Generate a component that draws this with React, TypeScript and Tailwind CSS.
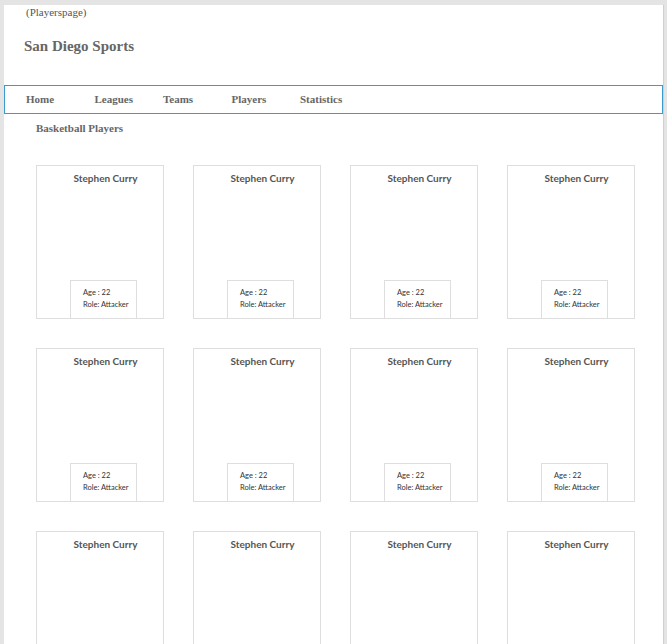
const navItems = ["Home", "Leagues", "Teams", "Players", "Statistics"];

const players = Array.from({ length: 12 }, (_, i) => ({
  id: i,
  name: "Stephen Curry",
  age: 22,
  role: "Attacker",
}));

function PlayerCard({ name, age, role }: { name: string; age: number; role: string }) {
  return (
    <div className="flex flex-col h-[154px] border border-[#dedede] bg-white">
      <div className="pt-[5px] pl-[11px] text-center text-[10px] leading-[14px] font-bold text-[#555] font-['Lato',sans-serif]">
        {name}
      </div>
      <div className="mt-auto ml-[33px] w-[67px] h-[38px] border border-b-0 border-[#dedede] pl-[12px] pt-[6px] text-[7.5px] leading-[12px] text-[#333] font-['Lato',sans-serif]">
        <div>Age : {age}</div>
        <div>Role: {role}</div>
      </div>
    </div>
  );
}

export default function App() {
  return (
    <div className="min-h-screen bg-[#e4e4e4] pt-[5px] pl-[4px] pr-[3px]">
      <div className="min-h-[639px] bg-white border-r border-[#cfcfcf] font-['Liberation_Serif',serif] pb-10">
        <div className="pl-[22px] text-[11px] leading-[14px] text-[#555]">(Playerspage)</div>
        <div className="mt-[17px] pl-[20px] text-[15px] leading-[20px] font-bold text-[#666]">San Diego Sports</div>

        <nav className="mt-[29px] h-[29px] border border-[#3a9bd0] flex items-center pl-[21px]">
          {navItems.map((item) => (
            <div key={item} className="w-[68.5px] text-[11px] font-bold text-[#666]">
              {item}
            </div>
          ))}
        </nav>

        <h2 className="mt-[7px] pl-[32px] text-[11px] leading-[14px] font-bold text-[#666]">Basketball Players</h2>

        <div className="mt-[30px] pl-[32px] grid grid-cols-[repeat(4,128px)] gap-x-[29px] gap-y-[29px]">
          {players.map((p) => (
            <PlayerCard key={p.id} name={p.name} age={p.age} role={p.role} />
          ))}
        </div>
      </div>
    </div>
  );
}
